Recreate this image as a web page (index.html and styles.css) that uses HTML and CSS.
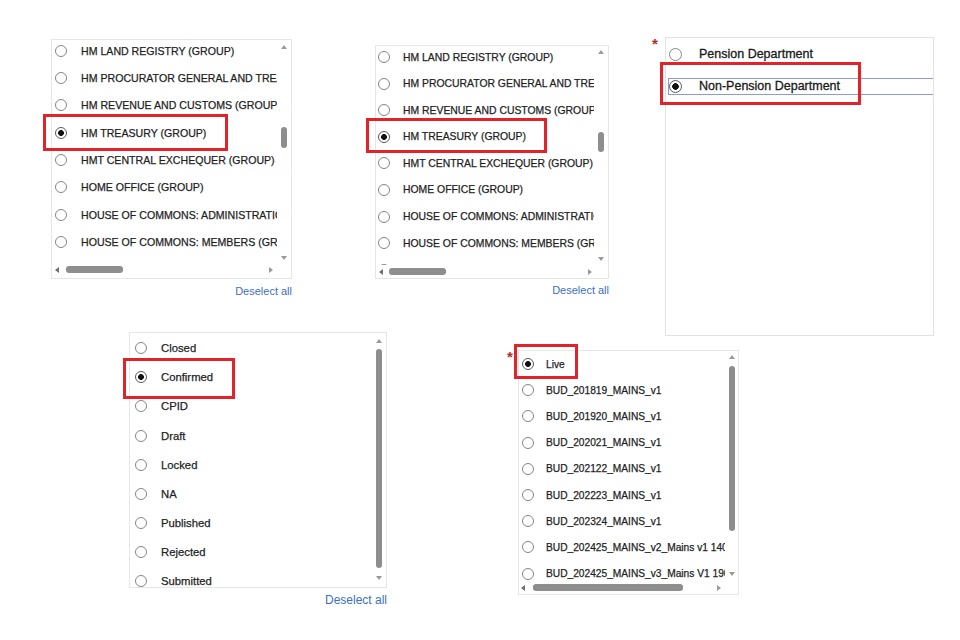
FILE: index.html
```html
<!DOCTYPE html>
<html lang="en">
<head>
    <meta charset="UTF-8">
    <meta name="viewport" content="width=device-width, initial-scale=1.0">
    <title>Radio list selections</title>
    <link rel="stylesheet" href="styles.css">
</head>
<body>
    <div class="page">
        <div class="row row-top">

            <div class="field g1">
                <div class="box">
                    <div class="list">
                        <label class="opt"><span class="radio"></span>HM LAND REGISTRY (GROUP)</label>
                        <label class="opt"><span class="radio"></span>HM PROCURATOR GENERAL AND TREASURY SOLICITOR (GROUP)</label>
                        <label class="opt"><span class="radio"></span>HM REVENUE AND CUSTOMS (GROUP)</label>
                        <label class="opt"><span class="radio on"></span>HM TREASURY (GROUP)</label>
                        <label class="opt"><span class="radio"></span>HMT CENTRAL EXCHEQUER (GROUP)</label>
                        <label class="opt"><span class="radio"></span>HOME OFFICE (GROUP)</label>
                        <label class="opt"><span class="radio"></span>HOUSE OF COMMONS: ADMINISTRATION</label>
                        <label class="opt"><span class="radio"></span>HOUSE OF COMMONS: MEMBERS (GROUP)</label>
                        <label class="opt"><span class="radio"></span>HOUSE OF LORDS (GROUP)</label>
                    </div>
                    <div class="vbar"><span class="arr up"></span><span class="thumb"></span><span class="arr down"></span></div>
                    <div class="hbar"><span class="arr left"></span><span class="thumb"></span><span class="arr right"></span></div>
                    <div class="mark"></div>
                </div>
                <a class="deselect" href="#">Deselect all</a>
            </div>

            <div class="field g2">
                <div class="box">
                    <div class="list">
                        <label class="opt"><span class="radio"></span>HM LAND REGISTRY (GROUP)</label>
                        <label class="opt"><span class="radio"></span>HM PROCURATOR GENERAL AND TREASURY SOLICITOR (GROUP)</label>
                        <label class="opt"><span class="radio"></span>HM REVENUE AND CUSTOMS (GROUP)</label>
                        <label class="opt"><span class="radio on"></span>HM TREASURY (GROUP)</label>
                        <label class="opt"><span class="radio"></span>HMT CENTRAL EXCHEQUER (GROUP)</label>
                        <label class="opt"><span class="radio"></span>HOME OFFICE (GROUP)</label>
                        <label class="opt"><span class="radio"></span>HOUSE OF COMMONS: ADMINISTRATION</label>
                        <label class="opt"><span class="radio"></span>HOUSE OF COMMONS: MEMBERS (GROUP)</label>
                        <label class="opt"><span class="radio"></span>HOUSE OF LORDS (GROUP)</label>
                    </div>
                    <div class="vbar"><span class="arr up"></span><span class="thumb"></span><span class="arr down"></span></div>
                    <div class="hbar"><span class="arr left"></span><span class="thumb"></span><span class="arr right"></span></div>
                    <div class="mark"></div>
                </div>
                <a class="deselect" href="#">Deselect all</a>
            </div>

            <div class="field req g3">
                <span class="star">*</span>
                <div class="box">
                    <div class="list">
                        <div class="line"><label class="opt"><span class="radio"></span>Pension Department</label></div>
                        <div class="line"><label class="opt focus"><span class="radio on"></span>Non-Pension Department</label></div>
                    </div>
                    <div class="mark"></div>
                </div>
            </div>
        </div>

        <div class="row row-bottom">
            <div class="field g4">
                <div class="box">
                    <div class="list">
                        <label class="opt"><span class="radio"></span>Closed</label>
                        <label class="opt"><span class="radio on"></span>Confirmed</label>
                        <label class="opt"><span class="radio"></span>CPID</label>
                        <label class="opt"><span class="radio"></span>Draft</label>
                        <label class="opt"><span class="radio"></span>Locked</label>
                        <label class="opt"><span class="radio"></span>NA</label>
                        <label class="opt"><span class="radio"></span>Published</label>
                        <label class="opt"><span class="radio"></span>Rejected</label>
                        <label class="opt"><span class="radio"></span>Submitted</label>
                    </div>
                    <div class="vbar"><span class="arr up"></span><span class="thumb"></span><span class="arr down"></span></div>
                    <div class="mark"></div>
                </div>
                <a class="deselect" href="#">Deselect all</a>
            </div>

            <div class="field req g5">
                <span class="star">*</span>
                <div class="box">
                    <div class="list">
                        <label class="opt"><span class="radio on"></span>Live</label>
                        <label class="opt"><span class="radio"></span>BUD_201819_MAINS_v1</label>
                        <label class="opt"><span class="radio"></span>BUD_201920_MAINS_v1</label>
                        <label class="opt"><span class="radio"></span>BUD_202021_MAINS_v1</label>
                        <label class="opt"><span class="radio"></span>BUD_202122_MAINS_v1</label>
                        <label class="opt"><span class="radio"></span>BUD_202223_MAINS_v1</label>
                        <label class="opt"><span class="radio"></span>BUD_202324_MAINS_v1</label>
                        <label class="opt"><span class="radio"></span>BUD_202425_MAINS_v2_Mains v1 1402</label>
                        <label class="opt"><span class="radio"></span>BUD_202425_MAINS_v3_Mains V1 1902</label>
                    </div>
                    <div class="vbar"><span class="arr up"></span><span class="thumb"></span><span class="arr down"></span></div>
                    <div class="hbar"><span class="arr left"></span><span class="thumb"></span><span class="arr right"></span></div>
                    <div class="mark"></div>
                </div>
            </div>
        </div>
    </div>
</body>
</html>
```

FILE: styles.css
```css
body {
    margin: 0;
    background: #fff;
    font-family: "Liberation Sans", Arial, sans-serif;
    color: #1f1f1f;
}
.page {
    width: 960px;
    height: 640px;
    overflow: hidden;
}
.row {
    display: flex;
    align-items: flex-start;
}

/* field = list box + link under it */
.field {
    display: flex;
    flex-direction: column;
}
.field.req {
    flex-direction: row;
}
.star {
    color: #b8282c;
    font-size: 15px;
    font-weight: bold;
    line-height: 14px;
}
.box {
    position: relative;
    box-sizing: border-box;
    border: 1px solid #e6e6e6;
    background: #fff;
    display: grid;
    grid-template-columns: minmax(0, 1fr) 14px;
    grid-template-rows: minmax(0, 1fr) 17px;
}
.list {
    overflow: hidden;
    min-width: 0;
    min-height: 0;
    -webkit-text-stroke: 0.25px #1f1f1f;
}
.opt {
    display: flex;
    align-items: center;
    white-space: nowrap;
}
.radio {
    flex: none;
    box-sizing: border-box;
    width: 12px;
    height: 12px;
    border: 1px solid #858585;
    border-radius: 50%;
    background: #fff;
}
.radio.on {
    border-color: #5a5a5a;
    background: radial-gradient(circle, #111 0 2.6px, #fff 3.2px);
}
.deselect {
    align-self: flex-end;
    font-size: 11px;
    line-height: 14px;
    color: #3d6fc2;
    text-decoration: none;
}
.mark {
    position: absolute;
    box-sizing: border-box;
    border: 3px solid #e2232a;
}

/* fake scrollbars */
.vbar {
    display: flex;
    flex-direction: column;
    align-items: center;
}
.hbar {
    display: flex;
    align-items: center;
}
.thumb {
    background: #8e8e8e;
    border-radius: 3px;
}
.vbar .thumb {
    width: 6px;
}
.hbar .thumb {
    height: 7px;
}
.arr {
    width: 0;
    height: 0;
    border: 0 solid transparent;
}
.arr.up {
    border-width: 0 3.5px 4px;
    border-bottom-color: #9a9a9a;
}
.arr.down {
    margin-top: auto;
    border-width: 4px 3.5px 0;
    border-top-color: #9a9a9a;
}
.arr.left {
    border-width: 3.5px 4px 3.5px 0;
    border-right-color: #6e6e6e;
}
.arr.right {
    margin-left: auto;
    border-width: 3.5px 0 3.5px 4px;
    border-left-color: #9a9a9a;
}

/* group list, first */
.g1 {
    margin: 39px 0 0 51px;
}
.g1 .box {
    width: 241px;
    height: 240px;
}
.g1 .list {
    font-size: 10.6px;
    padding-left: 3px;
}
.g1 .opt {
    height: 27.4px;
    gap: 14px;
}
.g1 .opt:first-child {
    margin-top: -3.2px;
}
.g1 .vbar {
    padding: 5px 0 1px;
}
.g1 .vbar .thumb {
    margin-top: 78px;
    height: 21px;
}
.g1 .hbar {
    padding: 0 4px 0 3px;
}
.g1 .hbar .thumb {
    margin-left: 7px;
    width: 57px;
}
.g1 .mark {
    left: -9px;
    top: 74px;
    width: 185px;
    height: 37px;
}
.g1 .deselect {
    margin-top: 5px;
}

/* group list, second */
.g2 {
    margin: 45px 0 0 83px;
}
.g2 .box {
    width: 234px;
    height: 234px;
    grid-template-rows: minmax(0, 1fr) 13px;
}
.g2 .list {
    font-size: 10.4px;
    padding-left: 2px;
}
.g2 .opt {
    height: 26.6px;
    gap: 13px;
}
.g2 .opt:first-child {
    margin-top: -2.3px;
}
.g2 .vbar {
    padding: 4px 0 4px;
}
.g2 .vbar .thumb {
    margin-top: 78px;
    height: 20px;
}
.g2 .hbar {
    padding: 0 2px 0 3px;
}
.g2 .hbar .thumb {
    margin-left: 6px;
    width: 57px;
}
.g2 .mark {
    left: -10px;
    top: 72px;
    width: 181px;
    height: 35px;
}
.g2 .deselect {
    margin-top: 4px;
}

/* pension type */
.g3 {
    margin: 37px 0 0 42px;
}
.g3 .star {
    width: 14px;
    padding-left: 1px;
    box-sizing: border-box;
}
.g3 .box {
    width: 269px;
    height: 299px;
    border-color: #e2e2e2;
    display: block;
}
.g3 .list {
    font-size: 12.5px;
    color: #1a1a1a;
    -webkit-text-stroke: 0.3px #1a1a1a;
}
.g3 .line {
    height: 32px;
    display: flex;
    align-items: center;
    padding-left: 2px;
}
.g3 .opt {
    flex: 1;
    box-sizing: border-box;
    height: 17px;
    border: 1px solid transparent;
    border-right: 0;
    gap: 17px;
}
.g3 .opt.focus {
    border-color: #8d9ad4;
}
.g3 .radio {
    width: 13px;
    height: 13px;
}
.g3 .radio.on {
    background: radial-gradient(circle, #111 0 3px, #fff 3.6px);
}
.g3 .mark {
    left: -6px;
    top: 24px;
    width: 201px;
    height: 43px;
}

/* status list */
.row-bottom {
    margin-top: -4px;
}
.g4 {
    margin-left: 129px;
}
.g4 .box {
    width: 258px;
    height: 256px;
    grid-template-rows: minmax(0, 1fr);
}
.g4 .list {
    font-size: 11.3px;
    padding-left: 5px;
}
.g4 .opt {
    height: 29.2px;
    gap: 14px;
}
.g4 .opt:first-child {
    margin-top: 0.4px;
}
.g4 .vbar {
    padding: 6px 0 7px;
}
.g4 .vbar .thumb {
    margin-top: 6px;
    height: 219px;
}
.g4 .mark {
    left: -7px;
    top: 25px;
    width: 112px;
    height: 41px;
}
.g4 .deselect {
    margin-top: 5px;
    font-size: 12px;
}

/* budget version list */
.g5 {
    margin: 18px 0 0 120px;
}
.g5 .star {
    width: 11px;
}
.g5 .box {
    width: 221px;
    height: 245px;
    grid-template-columns: minmax(0, 1fr) 13px;
    grid-template-rows: minmax(0, 1fr) 13px;
}
.g5 .list {
    font-size: 10.2px;
    padding-left: 3px;
}
.g5 .opt {
    height: 26.2px;
    gap: 12px;
}
.g5 .vbar {
    padding: 4px 0 5px;
}
.g5 .vbar .thumb {
    margin-top: 7px;
    height: 165px;
}
.g5 .hbar {
    padding: 0 4px 0 2px;
}
.g5 .hbar .thumb {
    margin-left: 8px;
    width: 150px;
}
.g5 .mark {
    left: -5px;
    top: -7px;
    width: 64px;
    height: 35px;
}
```
